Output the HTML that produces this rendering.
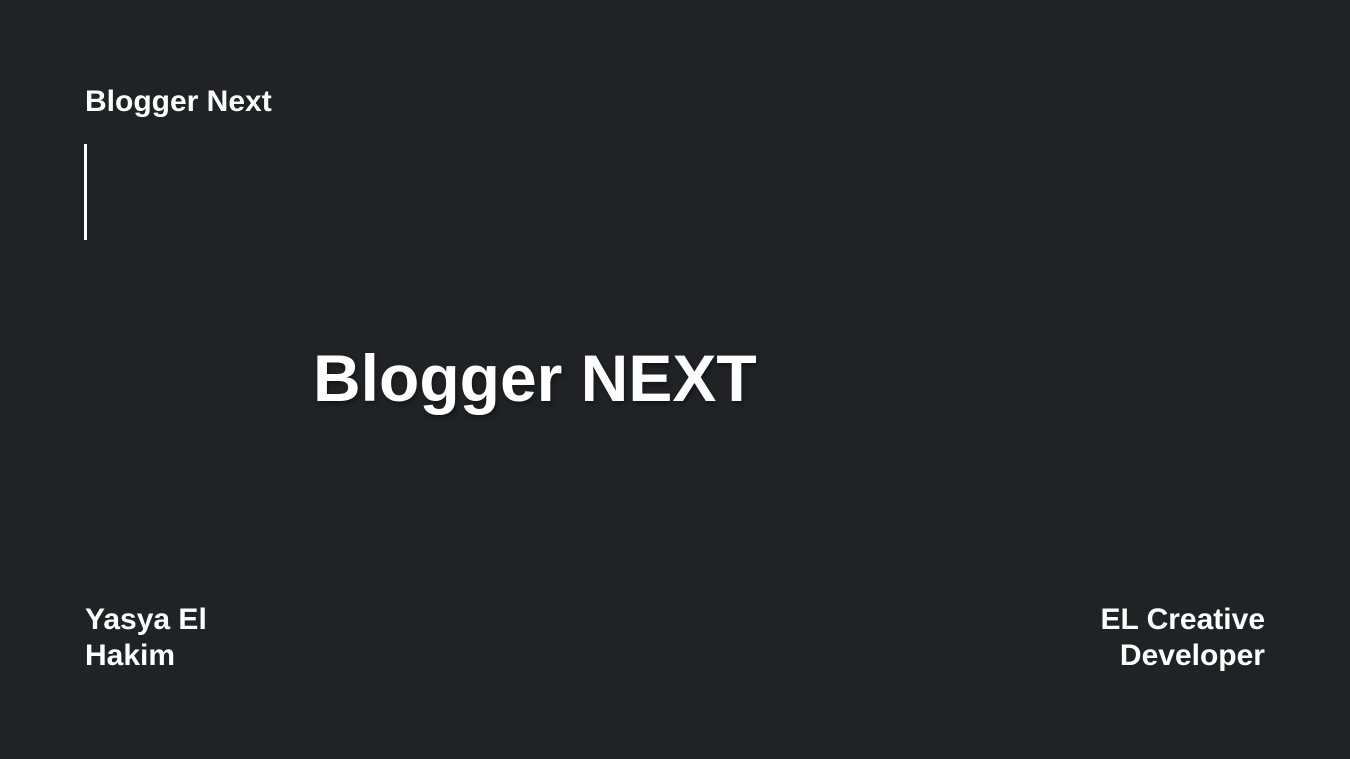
<!DOCTYPE html>
<html><head><style>
html,body{margin:0;padding:0}
body{width:1350px;height:759px;background:#212226;position:relative;overflow:hidden;font-family:"Liberation Sans",sans-serif;font-weight:bold;color:#fff}
.a{position:absolute;white-space:nowrap}
</style></head><body>
<div class="a" style="left:85px;top:84px;font-size:30px;line-height:36px;">Blogger Next</div>
<div class="a" style="left:84px;top:144px;width:3px;height:96px;background:#fff"></div>
<div class="a" style="left:313px;top:338px;font-size:66px;line-height:80px;text-shadow:2px 3px 5px rgba(0,0,0,0.35)">Blogger NEXT</div>
<div class="a" style="left:85px;top:602px;font-size:30px;line-height:36px;">Yasya El<br>Hakim</div>
<div class="a" style="right:85px;top:602px;font-size:30px;line-height:36px;text-align:right">EL Creative<br>Developer</div>
</body></html>
